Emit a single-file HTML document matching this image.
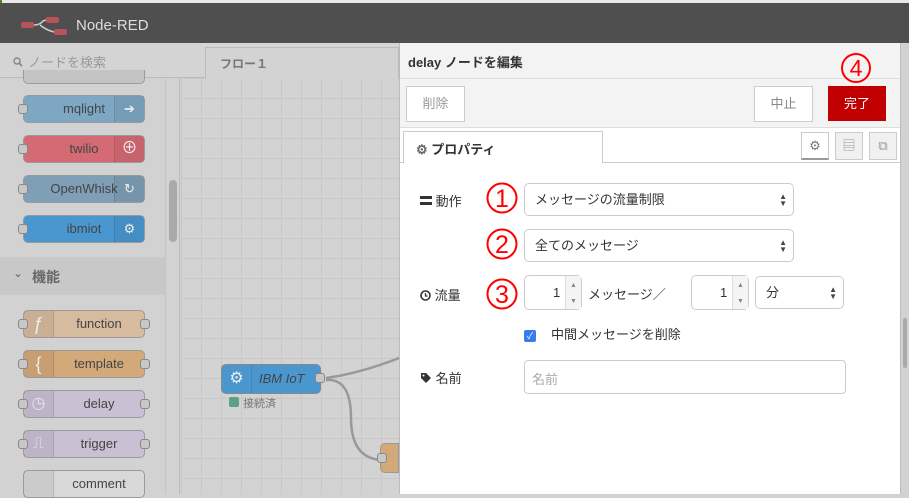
<!DOCTYPE html>
<html><head><meta charset="utf-8"><style>
*{box-sizing:border-box;margin:0;padding:0}
body{width:909px;height:494px;overflow:hidden;position:relative;background:#d2d2d2;font-family:"Liberation Sans","Noto Sans CJK JP",sans-serif;color:#555}
.abs{position:absolute}
.node{position:absolute;left:23px;width:122px;height:28px;border:1px solid #9a9a9a;border-radius:5px;font-size:13px;color:#444;text-align:center;line-height:26px}
.port{position:absolute;width:10px;height:10px;background:#c8c8c8;border:1px solid #888;border-radius:3px;top:8px}
.ic{position:absolute;top:0;width:30px;height:26px;background:rgba(0,0,0,.06);border-color:rgba(0,0,0,.1);border-style:solid;border-width:0}
.sel{position:absolute;border:1px solid #ccc;border-radius:5px;background:#fff;height:33px;font-size:13px;color:#333;line-height:31px;padding-left:10px}
.arr{position:absolute;right:6px;top:9px;font-size:8px;line-height:7px;color:#444}
.circ{position:absolute;width:32px;height:32px}
.lbl{position:absolute;left:420px;font-size:13px;color:#333}
</style></head><body>
<div class="abs" style="left:0;top:0;width:909px;height:3px;background:#e8e8e8"></div>
<div class="abs" style="left:0;top:0;width:2px;height:24px;background:#4a8a22"></div>
<div class="abs" style="left:0;top:3px;width:909px;height:40px;background:#4f4f4f"></div>
<svg class="abs" style="left:20px;top:15px" width="48" height="22"><rect x="1" y="7" width="13" height="6" rx="2" fill="#b85459"/><rect x="26" y="2" width="13" height="6" rx="2" fill="#b85459"/><rect x="34" y="14" width="13" height="6" rx="2" fill="#b85459"/><path d="M14 10 Q20 10 23 6 L26 5 M20 10 Q26 15 34 17" stroke="#ccc" stroke-width="1.5" fill="none"/></svg>
<div class="abs" style="left:76px;top:17px;font-size:15px;color:#ddd">Node-RED</div>
<!-- sidebar -->
<div class="abs" style="left:0;top:43px;width:180px;height:451px;background:#d2d2d2;border-right:1px solid #bbb"></div>
<div class="abs" style="left:0;top:43px;width:181px;height:35px;border-bottom:1px solid #bbb;background:#d4d4d4"></div>
<svg class="abs" style="left:13px;top:57px" width="10" height="10"><circle cx="4" cy="4" r="3" stroke="#888" stroke-width="1.5" fill="none"/><path d="M6 6 L9 9" stroke="#888" stroke-width="1.8"/></svg>
<div class="abs" style="left:28px;top:52px;font-size:13px;color:#999">ノードを検索</div>
<div class="abs" style="left:165px;top:78px;width:1px;height:416px;background:#c4c4c4"></div>
<div class="abs" style="left:169px;top:180px;width:8px;height:62px;background:#aaa;border-radius:4px"></div>
<div class="node" style="top:70px;height:14px;background:#c4c4c4;border-top:none;border-radius:0 0 5px 5px"></div>
<div class="node" style="top:95px;background:#7ea7c4">mqlight<div class="ic" style="right:0;border-left-width:1px;color:#eee">➔</div><div class="port" style="left:-6px"></div></div>
<div class="node" style="top:135px;background:#d36a74">twilio<div class="ic" style="right:0;border-left-width:1px;color:#eee;font-size:16px">⊕</div><div class="port" style="left:-6px"></div></div>
<div class="node" style="top:175px;background:#7e9fb5">OpenWhisk<div class="ic" style="right:0;border-left-width:1px;color:#eee">↻</div><div class="port" style="left:-6px"></div></div>
<div class="node" style="top:215px;background:#4a97d0">ibmiot<div class="ic" style="right:0;border-left-width:1px;color:#eee">⚙</div><div class="port" style="left:-6px"></div></div>
<div class="abs" style="left:0;top:257px;width:165px;height:38px;background:#c8c8c8"></div>
<div class="abs" style="left:13px;top:266px;font-size:12px;color:#666">⌄</div>
<div class="abs" style="left:32px;top:267px;font-size:14px;font-weight:bold;color:#666">機能</div>
<div class="node" style="top:310px;background:#d6bb9f;padding-left:30px">function<div class="ic" style="left:0;border-right-width:1px;color:#eee;font-size:18px">ƒ</div><div class="port" style="left:-6px"></div><div class="port" style="right:-6px"></div></div>
<div class="node" style="top:350px;background:#d4a97a;padding-left:30px">template<div class="ic" style="left:0;border-right-width:1px;color:#eee;font-size:18px">{</div><div class="port" style="left:-6px"></div><div class="port" style="right:-6px"></div></div>
<div class="node" style="top:390px;background:#c9c0d4;padding-left:30px">delay<div class="ic" style="left:0;border-right-width:1px;color:#e8e8e8;font-size:16px">◷</div><div class="port" style="left:-6px"></div><div class="port" style="right:-6px"></div></div>
<div class="node" style="top:430px;background:#c9c0d4;padding-left:30px">trigger<div class="ic" style="left:0;border-right-width:1px;color:#e8e8e8;font-size:16px">⎍</div><div class="port" style="left:-6px"></div><div class="port" style="right:-6px"></div></div>
<div class="node" style="top:470px;background:#d8d8d8;padding-left:30px">comment<div class="ic" style="left:0;border-right-width:1px"></div></div>
<!-- canvas -->
<div class="abs" style="left:181px;top:78px;width:218px;height:416px;background-color:#d3d3d3;background-image:linear-gradient(#c8c8c8 1px,transparent 1px),linear-gradient(90deg,#c8c8c8 1px,transparent 1px);background-size:20px 20px;background-position:0 0"></div>
<div class="abs" style="left:181px;top:43px;width:218px;height:35px;background:#d4d4d4;border-bottom:1px solid #bbb"></div>
<div class="abs" style="left:205px;top:47px;width:194px;height:32px;background:#d3d3d3;border:1px solid #bbb;border-bottom:none"></div>
<div class="abs" style="left:220px;top:55px;font-size:12px;font-weight:bold;color:#777">フロー１</div>
<svg class="abs" style="left:181px;top:78px" width="218" height="416"><path d="M145 300 Q180 295 218 280 M145 302 Q170 300 170 340 Q170 380 200 382" stroke="#999" stroke-width="2.5" fill="none"/></svg>
<div class="abs" style="left:221px;top:364px;width:100px;height:30px;background:#4a97d0;border:1px solid #888;border-radius:5px"><div style="position:absolute;left:0;top:0;width:30px;height:28px;border-right:1px solid rgba(0,0,0,.1);color:#eee;text-align:center;line-height:28px">⚙</div><div style="position:absolute;left:37px;top:6px;font-style:italic;font-size:13px;color:#444">IBM IoT</div></div>
<div class="port" style="left:315px;top:373px"></div>
<div class="abs" style="left:229px;top:397px;width:10px;height:10px;background:#5aa08a;border-radius:2px"></div>
<div class="abs" style="left:243px;top:395px;font-size:11px;color:#777">接続済</div>
<div class="abs" style="left:380px;top:443px;width:19px;height:30px;background:#d4a97a;border:1px solid #999;border-radius:5px 0 0 5px"></div>
<div class="port" style="left:377px;top:453px"></div>
<!-- right strip -->
<div class="abs" style="left:900px;top:43px;width:9px;height:451px;background:#d2d2d2"></div>
<div class="abs" style="left:903px;top:318px;width:4px;height:50px;background:#aaa;border-radius:2px"></div>
<!-- panel -->
<div class="abs" style="left:399px;top:43px;width:502px;height:451px;background:#fff;border-left:1px solid #bbb;border-right:1px solid #bbb"></div>
<div class="abs" style="left:400px;top:43px;width:500px;height:36px;background:#f3f3f3;border-bottom:1px solid #ddd"></div>
<div class="abs" style="left:408px;top:52px;font-size:13px;font-weight:bold;color:#333">delay ノードを編集</div>
<div class="abs" style="left:400px;top:79px;width:500px;height:49px;background:#f3f3f3;border-bottom:1px solid #ddd"></div>
<div class="abs" style="left:406px;top:86px;width:59px;height:36px;background:#fff;border:1px solid #ccc;font-size:13px;color:#999;text-align:center;line-height:34px">削除</div>
<div class="abs" style="left:754px;top:86px;width:59px;height:36px;background:#fff;border:1px solid #ccc;font-size:13px;color:#888;text-align:center;line-height:34px">中止</div>
<div class="abs" style="left:828px;top:86px;width:58px;height:35px;background:#c00000;font-size:13px;color:#fff;text-align:center;line-height:35px">完了</div>
<svg class="circ" style="left:840px;top:52px;width:32px;height:32px"><circle cx="16" cy="16" r="14" stroke="#f00" stroke-width="2" fill="none"/><text x="16" y="24" text-anchor="middle" font-family="Liberation Sans" font-size="23" fill="#f00">4</text></svg>
<div class="abs" style="left:400px;top:162px;width:500px;height:1px;background:#ccc"></div>
<div class="abs" style="left:403px;top:131px;width:200px;height:32px;background:#fff;border:1px solid #ccc;border-bottom:none"></div>
<div class="abs" style="left:416px;top:139px;font-size:13px;font-weight:bold;color:#333"><span style="color:#666">⚙</span> プロパティ</div>
<div class="abs" style="left:801px;top:132px;width:28px;height:28px;background:#fff;border:1px solid #ccc;border-bottom:2px solid #999;text-align:center;line-height:26px;color:#777;font-size:13px">⚙</div>
<div class="abs" style="left:835px;top:132px;width:28px;height:28px;background:#f0f0f0;border:1px solid #ccc;text-align:center;line-height:26px;color:#999;font-size:13px">▤</div>
<div class="abs" style="left:869px;top:132px;width:28px;height:28px;background:#f0f0f0;border:1px solid #ccc;text-align:center;line-height:26px;color:#999;font-size:13px">⧉</div>
<div class="lbl" style="top:191px"><span style="display:inline-block;width:12px;height:9px;border-top:3px solid #333;border-bottom:3px solid #333;vertical-align:1px"></span> 動作</div>
<svg class="circ" style="left:486px;top:182px"><circle cx="16" cy="16" r="14.5" stroke="#f00" stroke-width="2" fill="none"/><text x="16" y="25" text-anchor="middle" font-family="Liberation Sans" font-size="25" fill="#f00">1</text></svg>
<div class="sel" style="left:524px;top:183px;width:270px">メッセージの流量制限<div class="arr">▲<br>▼</div></div>
<svg class="circ" style="left:486px;top:228px"><circle cx="16" cy="16" r="14.5" stroke="#f00" stroke-width="2" fill="none"/><text x="16" y="25" text-anchor="middle" font-family="Liberation Sans" font-size="25" fill="#f00">2</text></svg>
<div class="sel" style="left:524px;top:229px;width:270px">全てのメッセージ<div class="arr">▲<br>▼</div></div>
<div class="lbl" style="top:285px"><svg width="11" height="11" style="vertical-align:-1px"><circle cx="5.5" cy="5.5" r="4.5" stroke="#333" stroke-width="1.6" fill="none"/><path d="M5.5 3 V6 H7.5" stroke="#333" stroke-width="1.3" fill="none"/></svg> 流量</div>
<svg class="circ" style="left:486px;top:278px"><circle cx="16" cy="16" r="14.5" stroke="#f00" stroke-width="2" fill="none"/><text x="16" y="25" text-anchor="middle" font-family="Liberation Sans" font-size="25" fill="#f00">3</text></svg>
<div class="abs" style="left:524px;top:275px;width:58px;height:35px;border:1px solid #ccc;border-radius:5px;background:#fff"><div style="position:absolute;right:0;top:0;width:16px;height:33px;border-left:1px solid #ddd;background:#f4f4f4;font-size:7px;color:#888;text-align:center;line-height:8px;padding-top:6px">▲<br><br>▼</div><div style="position:absolute;left:28px;top:9px;font-size:13px;color:#333">1</div></div>
<div class="abs" style="left:588px;top:284px;font-size:13px;color:#333">メッセージ／</div>
<div class="abs" style="left:691px;top:275px;width:58px;height:35px;border:1px solid #ccc;border-radius:5px;background:#fff"><div style="position:absolute;right:0;top:0;width:16px;height:33px;border-left:1px solid #ddd;background:#f4f4f4;font-size:7px;color:#888;text-align:center;line-height:8px;padding-top:6px">▲<br><br>▼</div><div style="position:absolute;left:28px;top:9px;font-size:13px;color:#333">1</div></div>
<div class="sel" style="left:755px;top:276px;width:89px">分<div class="arr">▲<br>▼</div></div>
<div class="abs" style="left:524px;top:330px;width:12px;height:12px;background:#3a7cf0;border-radius:2px;color:#fff;font-size:9px;text-align:center;line-height:12px">✓</div>
<div class="abs" style="left:551px;top:324px;font-size:13px;color:#333">中間メッセージを削除</div>
<div class="lbl" style="top:368px"><svg width="12" height="12" style="vertical-align:-1px"><path d="M1 1 H6 L11 6 L6 11 L1 6 Z" fill="#333"/><circle cx="3.5" cy="3.5" r="1" fill="#fff"/></svg> 名前</div>
<div class="abs" style="left:524px;top:360px;width:322px;height:34px;border:1px solid #ccc;border-radius:4px;background:#fff;font-size:13px;color:#aaa;padding:8px 7px">名前</div>
</body></html>
